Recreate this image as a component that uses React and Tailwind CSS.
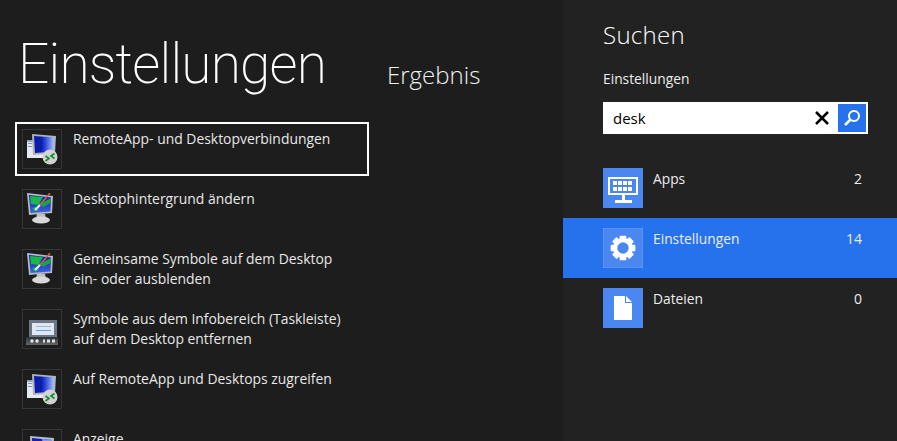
import React from 'react';

const font = 'font-["Open_Sans","Noto_Sans",sans-serif]';

function RemoteIcon() {
  return (
    <svg width="32" height="32" viewBox="0 0 32 32">
      <defs>
        <linearGradient id="remoteScreen" x1="0" y1="0" x2="1" y2="0">
          <stop offset="0.35" stopColor="#0a1ca8" />
          <stop offset="0.55" stopColor="#2a48d8" />
          <stop offset="1" stopColor="#b4c6f5" />
        </linearGradient>
      </defs>
      <rect x="1" y="7" width="17" height="18" fill="#e6e9ee" />
      <rect x="1" y="7" width="17" height="2" fill="#8aa4cc" />
      <rect x="2" y="10" width="4" height="1" fill="#7f93b4" />
      <rect x="2" y="13" width="4" height="1" fill="#7f93b4" />
      <path d="M6 1 L30 3 L29 20 L7 22 Z" fill="#aeb4bc" />
      <path d="M8 3 L28.500 4.500 L27.500 18.500 L9 20 Z" fill="url(#remoteScreen)" />
      <circle cx="24" cy="24" r="7.500" fill="#d0d3d1" />
      <path d="M19.500 23 L23 25.500 L19.500 28 M28.500 20.500 L25 23 L28.500 25.500" stroke="#178a38" strokeWidth="1.600" fill="none" />
    </svg>
  );
}

function WallpaperIcon() {
  const gid = 'wallScreen';
  return (
    <svg width="32" height="32" viewBox="0 0 32 32">
      <defs>
        <linearGradient id={gid} x1="0" y1="0" x2="0" y2="1">
          <stop offset="0" stopColor="#0c1a9c" />
          <stop offset="1" stopColor="#3f63e6" />
        </linearGradient>
      </defs>
      <path d="M1 0 L27 3 L26 20 L3 22 Z" fill="#b4bac0" />
      <path d="M3 2 L25 4.500 L24.500 18.500 L4.500 20 Z" fill={`url(#${gid})`} />
      <path d="M4 3 L17 4 L14 9 L13 12 L5 11 Z" fill="#18b84a" />
      <path d="M14 11 L25 5 L24.500 10 L17 14 Z" fill="#1aa544" />
      <path d="M6 15 L13 13 L12 18 L8 18 Z" fill="#16b04c" />
      <path d="M13 13 L24 0" stroke="#d95a3c" strokeWidth="1.500" />
      <path d="M9 17 L14 12" stroke="#ececec" strokeWidth="2" />
      <path d="M11 21 L19 21 L20 25 L10 25 Z" fill="#c0c0c0" />
      <ellipse cx="15" cy="27" rx="9" ry="3.500" fill="#d8d8d8" />
    </svg>
  );
}

function TrayIcon() {
  return (
    <svg width="32" height="32" viewBox="0 0 32 32">
      <defs>
        <linearGradient id="trayBar" x1="0" y1="0" x2="0" y2="1">
          <stop offset="0" stopColor="#2e3134" />
          <stop offset="1" stopColor="#64676a" />
        </linearGradient>
      </defs>
      <rect x="3" y="7" width="28" height="17" fill="#6a7688" />
      <rect x="6" y="10" width="22" height="12" fill="#dfe8f2" />
      <rect x="10" y="13" width="15" height="1" fill="#a9b6c6" />
      <rect x="10" y="17" width="15" height="1" fill="#6d9fe6" />
      <rect x="0" y="24" width="32" height="8" fill="url(#trayBar)" />
      <circle cx="6" cy="28" r="1.700" fill="#e8e8e8" />
      <circle cx="11" cy="28" r="1.700" fill="#e8e8e8" />
      <rect x="17" y="26.500" width="2" height="3" fill="#e0e0e0" />
      <rect x="21" y="26.500" width="3" height="3" fill="#e0e0e0" />
      <rect x="26" y="26.500" width="3" height="3" fill="#e0e0e0" />
    </svg>
  );
}

function DisplayIcon() {
  return (
    <svg width="32" height="32" viewBox="0 0 32 32">
      <path d="M4 3 L28 5 L27 23 L5 25 Z" fill="#b9bec4" />
      <path d="M6 5 L26 7 L25.500 21.500 L6.500 23 Z" fill="#1220b4" />
      <path d="M16 6 L26 7 L25.500 21 L19 22 Z" fill="#7f97ee" />
    </svg>
  );
}

function KeyboardIcon() {
  const keysX = [10, 15, 20, 25];
  return (
    <svg width="40" height="40" viewBox="0 0 40 40" fill="white">
      <path fillRule="evenodd" d="M5 9 H35 V27 H5 Z M7 11 V25 H33 V11 Z" />
      {keysX.map((x) => (
        <rect key={`a${x}`} x={x} y="13" width="4" height="4" />
      ))}
      {keysX.map((x) => (
        <rect key={`b${x}`} x={x} y="19" width="4" height="4" />
      ))}
      <rect x="19" y="27" width="3" height="5" />
      <rect x="12" y="32" width="17" height="3" />
    </svg>
  );
}

function GearIcon() {
  const teeth = [0, 45, 90, 135];
  return (
    <svg width="40" height="40" viewBox="0 0 40 40">
      {teeth.map((a) => (
        <rect key={a} x="16.500" y="7" width="7" height="26" rx="1" fill="white" transform={`rotate(${a} 20 20)`} />
      ))}
      <circle cx="20" cy="20" r="10.500" fill="white" />
      <circle cx="20" cy="20" r="6" fill="#4b87f0" />
    </svg>
  );
}

function FileIcon() {
  return (
    <svg width="40" height="40" viewBox="0 0 40 40" fill="white">
      <path d="M11 8 H22 V15 H29 V32 H11 Z" />
      <path d="M23 8 L29 14 H23 Z" />
    </svg>
  );
}

function SearchIcon() {
  return (
    <svg width="28" height="28" viewBox="0 0 28 28" fill="none" stroke="white">
      <circle cx="16" cy="12" r="5" strokeWidth="2" />
      <path d="M12.500 15.500 L7 21" strokeWidth="2.500" />
    </svg>
  );
}

function ResultRow({ icon, lines }) {
  return (
    <div className="flex h-[60px] items-start pl-[22px] pt-[7px]">
      <div className="flex size-[40px] shrink-0 items-center justify-center border border-[#353535]">{icon}</div>
      <div className="ml-[11px] text-[13.900px] leading-[20px] text-[#e8e8e8]">
        {lines.map((line) => (
          <div key={line}>{line}</div>
        ))}
      </div>
    </div>
  );
}

function CategoryRow({ icon, label, count, active }) {
  return (
    <div className={`flex h-[60px] items-start pl-[40px] pr-[35px] pt-[10px] ${active ? 'bg-[#2672ec]' : ''}`}>
      <div className={`flex size-[40px] shrink-0 items-center justify-center ${active ? 'border border-[#5c93ef] bg-[#4b87f0]' : 'bg-[#4b87f0]'}`}>
        {icon}
      </div>
      <div className="ml-[10px] flex-1 pt-[1px] text-[13.800px] leading-[20px] text-[#ececec]">{label}</div>
      <div className="pt-[1px] text-[14px] leading-[20px] text-[#ececec]">{count}</div>
    </div>
  );
}

export default function App() {
  return (
    <div className={`flex h-[441px] w-[897px] overflow-hidden bg-[#1d1d1d] ${font}`}>
      <div className="h-full w-[563px] shrink-0 overflow-hidden">
        <div className="flex h-[122px] items-start">
          <h1 className='ml-[18px] mt-[26px] w-[369px] shrink-0 font-["Roboto",sans-serif] text-[55px] font-extralight leading-[76px] tracking-[-0.800px] text-white'>Einstellungen</h1>
          <h2 className="mt-[58px] whitespace-nowrap text-[24px] font-light leading-[34px] text-[#f0f0f0]">Ergebnis</h2>
        </div>
        <div className="relative">
          <div className="absolute left-[15px] top-0 h-[54px] w-[354px] border-2 border-white"></div>
          <ResultRow icon={<RemoteIcon />} lines={['RemoteApp- und Desktopverbindungen']} />
          <ResultRow icon={<WallpaperIcon />} lines={['Desktophintergrund ändern']} />
          <ResultRow icon={<WallpaperIcon />} lines={['Gemeinsame Symbole auf dem Desktop', 'ein- oder ausblenden']} />
          <ResultRow icon={<TrayIcon />} lines={['Symbole aus dem Infobereich (Taskleiste)', 'auf dem Desktop entfernen']} />
          <ResultRow icon={<RemoteIcon />} lines={['Auf RemoteApp und Desktops zugreifen']} />
          <ResultRow icon={<DisplayIcon />} lines={['Anzeige']} />
        </div>
      </div>

      <div className="h-full flex-1 bg-[#222222]">
        <div className="pl-[40px] pr-[29px]">
          <div className="pt-[18px] text-[24px] font-light leading-[33px] tracking-[0.300px] text-white">Suchen</div>
          <div className="mt-[18px] text-[13.800px] leading-[20px] text-[#ececec]">Einstellungen</div>
          <div className="mt-[13px] flex h-[32px] items-center bg-white pl-[10px] pr-[2px]">
            <span className="flex-1 text-[15px] text-black">desk</span>
            <svg width="14" height="14" viewBox="0 0 14 14" stroke="black" strokeWidth="2.500" className="mr-[9px]">
              <path d="M1 1 L13 13 M13 1 L1 13" />
            </svg>
            <div className="flex size-[28px] items-center justify-center bg-[#2672ec]">
              <SearchIcon />
            </div>
          </div>
        </div>
        <div className="mt-[24px]">
          <CategoryRow icon={<KeyboardIcon />} label="Apps" count="2" />
          <CategoryRow icon={<GearIcon />} label="Einstellungen" count="14" active />
          <CategoryRow icon={<FileIcon />} label="Dateien" count="0" />
        </div>
      </div>
    </div>
  );
}
